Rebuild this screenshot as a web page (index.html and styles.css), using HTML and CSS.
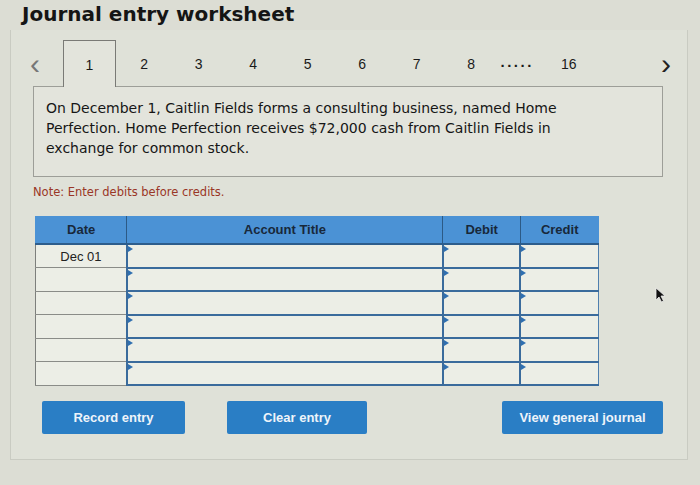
FILE: index.html
```html
<!DOCTYPE html>
<html lang="en">
<head>
    <meta charset="UTF-8">
    <meta name="viewport" content="width=device-width, initial-scale=1.0">
    <title>Journal entry worksheet</title>
    <link rel="stylesheet" href="styles.css">
</head>
<body>
    <h1 class="title">Journal entry worksheet</h1>

    <div class="panel">
        <!-- Transaction tabs -->
        <div class="tabs">
            <span class="arrow prev">&lsaquo;</span>
            <span class="tab active">1</span>
            <span class="tab">2</span>
            <span class="tab">3</span>
            <span class="tab">4</span>
            <span class="tab">5</span>
            <span class="tab">6</span>
            <span class="tab">7</span>
            <span class="tab">8</span>
            <span class="dots">.....</span>
            <span class="tab">16</span>
            <span class="arrow next">&rsaquo;</span>
        </div>

        <div class="question">
            On December 1, Caitlin Fields forms a consulting business, named Home
            Perfection. Home Perfection receives $72,000 cash from Caitlin Fields in
            exchange for common stock.
        </div>

        <p class="note">Note: Enter debits before credits.</p>

        <table class="journal">
            <thead>
                <tr>
                    <th class="col-date">Date</th>
                    <th class="col-account">Account Title</th>
                    <th class="col-debit">Debit</th>
                    <th class="col-credit">Credit</th>
                </tr>
            </thead>
            <tbody>
                <tr><td class="date">Dec 01</td><td class="inp"></td><td class="inp"></td><td class="inp"></td></tr>
                <tr><td class="date"></td><td class="inp"></td><td class="inp"></td><td class="inp"></td></tr>
                <tr><td class="date"></td><td class="inp"></td><td class="inp"></td><td class="inp"></td></tr>
                <tr><td class="date"></td><td class="inp"></td><td class="inp"></td><td class="inp"></td></tr>
                <tr><td class="date"></td><td class="inp"></td><td class="inp"></td><td class="inp"></td></tr>
                <tr><td class="date"></td><td class="inp"></td><td class="inp"></td><td class="inp"></td></tr>
            </tbody>
        </table>

        <div class="actions">
            <button class="btn">Record entry</button>
            <button class="btn clear">Clear entry</button>
            <button class="btn view">View general journal</button>
        </div>
    </div>

    <!-- Mouse pointer -->
    <svg class="pointer" width="12" height="16" viewBox="0 0 12 16">
        <path d="M1 1 L1 13 L4 10 L6.5 15 L8.5 14 L6 9 L10 9 Z" fill="#111" stroke="#eee" stroke-width="0.8"/>
    </svg>
</body>
</html>
```

FILE: styles.css
```css
body {
    margin: 0;
    background: #dcddd4;
    font-family: "DejaVu Sans", sans-serif;
    color: #1a1a1a;
    width: 700px;
    height: 485px;
    overflow: hidden;
    position: relative;
}
.title {
    margin: 0;
    padding: 2px 0 0 22px;
    height: 28px;
    font-size: 20px;
    line-height: 24px;
    font-weight: bold;
    color: #151515;
}
.panel {
    margin: 0 12px 0 10px;
    padding: 10px 0 25px 22px;
    border: 1px solid #c9cbc2;
    border-top: none;
    background: #dfe1d8;
}
.tabs {
    display: flex;
    align-items: stretch;
    height: 46px;
    width: 638px;
    font-family: "Liberation Sans", Arial, sans-serif;
    font-size: 14px;
}
.arrow {
    display: flex;
    align-items: center;
    font-size: 30px;
    color: #333;
    padding-top: 2px;
}
.prev {
    width: 33px;
    margin-left: -3px;
    color: #777;
}
.next {
    margin-left: auto;
    color: #222;
}
.tab {
    width: 54.5px;
    display: flex;
    align-items: center;
    justify-content: center;
    padding-top: 2px;
    box-sizing: border-box;
}
.tab.active {
    width: 53px;
    margin-right: 1px;
    background: #e3e4dc;
    border: 1px solid #7a7a76;
    border-bottom: none;
    margin-bottom: -1px;
    position: relative;
    z-index: 1;
}
.dots {
    width: 43px;
    display: flex;
    align-items: center;
    padding-left: 2px;
    font-weight: bold;
    font-size: 15px;
    letter-spacing: 2.5px;
    padding-bottom: 3px;
    box-sizing: border-box;
}
.question {
    width: 630px;
    height: 91px;
    box-sizing: border-box;
    padding: 11px 88px 10px 12px;
    background: #e3e4dc;
    border: 1px solid #9d9e98;
    font-family: "DejaVu Sans", sans-serif;
    font-size: 14px;
    line-height: 20px;
    color: #161616;
}
.note {
    margin: 7px 0 0;
    font-family: "DejaVu Sans", sans-serif;
    font-size: 11.5px;
    line-height: 16px;
    color: #9a3626;
}
.journal {
    margin-top: 16px;
    margin-left: 2px;
    width: 564px;
    border-collapse: collapse;
    font-family: "Liberation Sans", Arial, sans-serif;
    background: #eceee6;
}
.journal th {
    height: 27px;
    padding: 0;
    background: #4b92d5;
    color: #18283a;
    font-size: 13px;
    font-weight: bold;
    border-left: 1px solid #2c5a86;
    border-bottom: 2px solid #2d5d8c;
}
.journal th:first-child {
    border-left: 1px solid #4b92d5;
}
.col-date { width: 91px; }
.col-account { width: 318px; }
.col-debit { width: 77px; }
.col-credit { width: 78px; }
.journal td {
    height: 21.5px;
    padding: 0;
}
.journal td.date {
    text-align: center;
    font-size: 13px;
    color: #222;
    border-left: 1px solid #7d7f7c;
    border-bottom: 1px solid #8a8c88;
}
.journal td.inp {
    position: relative;
    border-left: 2px solid #3a6b9c;
    border-bottom: 2px solid #3a6b9c;
    border-right: 1px solid #4f7fae;
}
.journal td.inp::before {
    content: "";
    position: absolute;
    left: 0;
    top: 1px;
    border-top: 3px solid transparent;
    border-bottom: 3px solid transparent;
    border-left: 5px solid #2f6fb0;
}
.actions {
    display: flex;
    margin-top: 15px;
    padding-left: 9px;
    width: 621px;
}
.btn {
    height: 33px;
    width: 143px;
    border: none;
    border-radius: 2px;
    background: #2a7ec5;
    color: #eef4fa;
    font-family: "Liberation Sans", Arial, sans-serif;
    font-size: 13px;
    font-weight: bold;
}
.btn.clear {
    width: 140px;
    margin-left: 42px;
}
.btn.view {
    width: 161px;
    margin-left: auto;
}
.pointer {
    position: absolute;
    left: 655px;
    top: 287px;
}
```
